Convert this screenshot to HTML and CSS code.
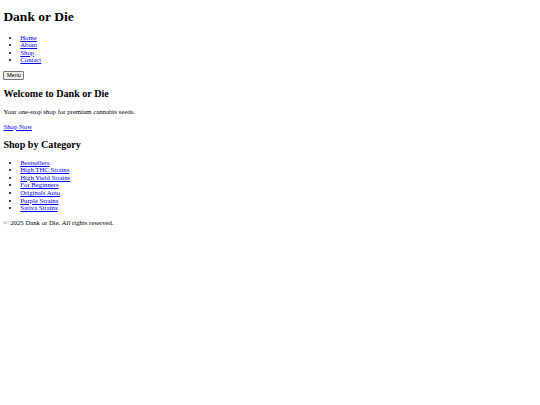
FILE: index.html
```html
<!DOCTYPE html>
<html lang="en">
<head>
<meta charset="utf-8">
<title>Dank or Die</title>
<link rel="stylesheet" href="styles.css">
</head>
<body class="page">
<header class="site-header">
  <h1 class="site-title">Dank or Die</h1>
  <nav class="site-nav">
    <ul class="list">
      <li><a href="#">Home</a></li>
      <li><a href="#">About</a></li>
      <li><a href="#">Shop</a></li>
      <li><a href="#">Contact</a></li>
    </ul>
  </nav>
  <button class="menu-toggle">Menu</button>
</header>
<main>
  <section class="hero">
    <h2 class="heading">Welcome to Dank or Die</h2>
    <p class="text">Your one-stop shop for premium cannabis seeds.</p>
    <a href="#">Shop Now</a>
  </section>
  <section class="categories">
    <h2 class="heading">Shop by Category</h2>
    <ul class="list">
      <li><a href="#">Bestsellers</a></li>
      <li><a href="#">High THC Strains</a></li>
      <li><a href="#">High Yield Strains</a></li>
      <li><a href="#">For Beginners</a></li>
      <li><a href="#">Originals Auto</a></li>
      <li><a href="#">Purple Strains</a></li>
      <li><a href="#">Sativa Strains</a></li>
    </ul>
  </section>
</main>
<footer class="site-footer">
  <p class="text">&copy; 2025 Dank or Die. All rights reserved.</p>
</footer>
</body>
</html>
```
FILE: styles.css
```css
.page {
  margin: 0 3.375px;
  font-family: "Liberation Serif", "Times New Roman", serif;
  font-size: 6.75px;
  line-height: 7.6px;
  background: #fff;
  color: #000;
}
.page a {
  color: #0000ee;
}
.site-title {
  font-size: 13.5px;
  line-height: 15.5px;
  margin: 9.05px 0;
}
.heading {
  font-size: 10.125px;
  line-height: 11.6px;
  margin: 8.4px 0;
}
.text {
  margin: 6.75px 0;
}
.list {
  margin: 6.75px 0;
  padding-left: 16.875px;
}
.menu-toggle {
  font-family: "Liberation Sans", Arial, sans-serif;
  font-size: 5.625px;
  line-height: 6.5px;
  padding: 0.4px 2.5px;
  border: 0.8px solid #767676;
  border-radius: 1px;
  background: #efefef;
  color: #000;
}
```
